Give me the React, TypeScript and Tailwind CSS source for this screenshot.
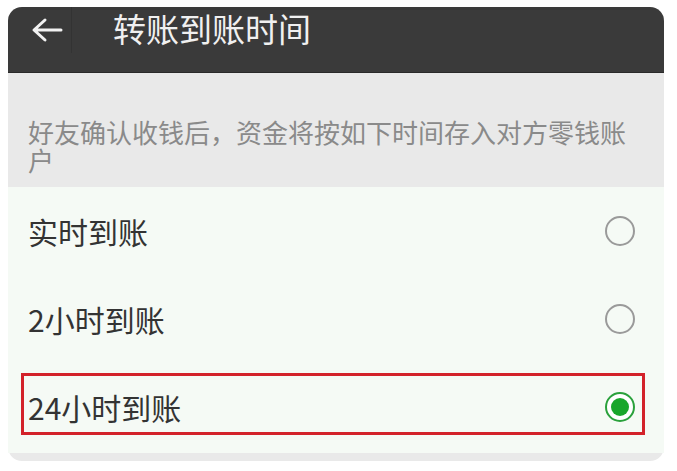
import React, { useState } from "react";

const options = ["实时到账", "2小时到账", "24小时到账"];

function Radio({ checked }: { checked: boolean }) {
  if (checked) {
    return (
      <span className="flex h-[30px] w-[30px] items-center justify-center rounded-full border-2 border-[#2aa13c] bg-white">
        <span className="h-[18px] w-[18px] rounded-full bg-[#19a62b]" />
      </span>
    );
  }
  return <span className="block h-[30px] w-[30px] rounded-full border-2 border-[#9a9a9a]" />;
}

export default function App() {
  const [selected, setSelected] = useState(2);

  return (
    <div
      className="h-[471px] w-[677px] bg-white pt-[7px] pl-[8px]"
      style={{ fontFamily: '"Noto Sans CJK SC", "Noto Sans", sans-serif' }}
    >
      <div className="w-[656px] rounded-[14px] bg-[#e9e9e9]">
        <div className="flex h-[66px] items-start rounded-t-[14px] border-b border-[#2a2a2a] bg-[#3a3a3a]">
          <div className="flex h-[46px] w-[64px] items-center justify-center border-r border-[#333333]">
            <svg width="32" height="26" viewBox="0 0 32 26" fill="none" className="ml-[14px]">
              <path d="M30 13H4M14 3L3 13l11 10" stroke="#f2f2f2" strokeWidth="3" strokeLinecap="round" strokeLinejoin="round" />
            </svg>
          </div>
          <span className="ml-[41px] text-[33px] leading-[42px] text-[#f0f0f0]">转账到账时间</span>
        </div>

        <div className="px-[20px] pt-[45px] pb-[13px] text-[26px] leading-[28px] text-[#8a8a8a]">
          好友确认收钱后，资金将按如下时间存入对方零钱账户
        </div>

        <div className="bg-[#f5faf5] pb-[2px]">
          {options.map((label, i) => (
            <div
              key={label}
              onClick={() => setSelected(i)}
              className="relative flex h-[88px] cursor-pointer items-center justify-between pr-[29px] pl-[20px]"
            >
              <span className="text-[30px] leading-none text-[#333333]">{label}</span>
              <Radio checked={selected === i} />
              {i === 2 && (
                <div className="absolute top-[10px] right-[19px] left-[13px] h-[62px] border-[3px] border-[#d3222a]" />
              )}
            </div>
          ))}
        </div>
        <div className="h-[8px] rounded-b-[14px]" />
      </div>
    </div>
  );
}
